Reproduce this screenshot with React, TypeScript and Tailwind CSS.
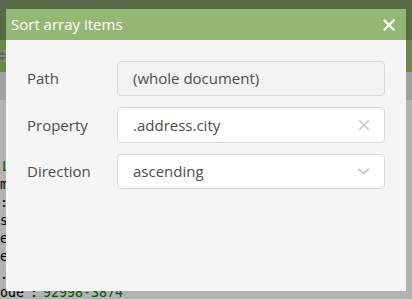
import React from 'react';

const CloseIcon: React.FC<{ className?: string; strokeWidth?: number }> = ({ className, strokeWidth = 2 }) => (
  <svg viewBox="0 0 12 12" className={className} fill="none" stroke="currentColor" strokeWidth={strokeWidth} strokeLinecap="square">
    <path d="M1.5 1.5 L10.5 10.5 M10.5 1.5 L1.5 10.5" />
  </svg>
);

const ChevronIcon: React.FC<{ className?: string }> = ({ className }) => (
  <svg viewBox="0 0 14 8" className={className} fill="none" stroke="currentColor" strokeWidth={2}>
    <path d="M1 1 L7 6.5 L13 1" />
  </svg>
);

// only the first glyph of each line peeks out from behind the dialog
const lines: { text: string; color: string }[] = [
  { text: '', color: '' },
  { text: '', color: '' },
  { text: '', color: '' },
  { text: 'L', color: 'pl-[2px] text-[#008000]' },
  { text: 'm', color: 'text-black' },
  { text: ':', color: 'text-black' },
  { text: 's', color: 'text-black' },
  { text: 'e', color: 'text-black' },
  { text: 'e', color: 'text-black' },
  { text: '.', color: 'text-black' },
];

const Field: React.FC<{ label: string; children: React.ReactNode }> = ({ label, children }) => (
  <div className="flex items-center">
    <div className="w-[90px] text-[15px] text-[#4d4d4d]">{label}</div>
    {children}
  </div>
);

export default function App() {
  return (
    <div className="relative h-[299px] w-[412px] overflow-hidden bg-white font-['Open_Sans',sans-serif]">
      {/* editor behind the dialog */}
      <div className="h-[40px] bg-[#7b9963]" />
      <div className="flex h-[32px] items-center bg-[#99c572]">
        <div className="ml-[-4px] flex h-[12px] w-[12px] flex-col items-center justify-center bg-[#b7c9a8]">
          <svg viewBox="0 0 10 10" className="h-[10px] w-[10px] text-[#8a9a80]" fill="currentColor">
            <path d="M5 0 L9 4 L1 4 Z M5 10 L9 6 L1 6 Z" />
          </svg>
        </div>
      </div>
      <div className="h-[28px] bg-[#e5e5e5]" />
      <div className="pt-[4px] font-['DejaVu_Sans_Mono',monospace] text-[13.3px] leading-[18px]">
        {lines.map((l, i) => (
          <div key={i} className={`h-[18px] whitespace-pre ${l.color}`}>{l.text}</div>
        ))}
        <div className="flex h-[18px] whitespace-pre">
          <span className="text-black">ode</span>
          <span className="pl-[6px] pr-[5px] text-black">:</span>
          <span className="text-[#008000]">92998-3874</span>
        </div>
      </div>

      {/* overlay + dialog */}
      <div className="absolute inset-0 flex justify-center bg-black/30 pt-[9px]">
        <div className="flex h-[282px] w-[400px] flex-col bg-[#f5f5f5]">
          <div className="flex h-[31px] items-center justify-between bg-[#93b874] pl-[5px] pr-[11px]">
            <span className="text-[15px] text-white">Sort array items</span>
            <CloseIcon className="h-[12px] w-[12px] text-white" strokeWidth={2.2} />
          </div>
          <div className="flex flex-col gap-[11px] px-[21px] pt-[21px]">
            <Field label="Path">
              <div className="flex h-[35px] flex-1 items-center rounded-[4px] border border-[#d9d9d9] bg-[#f2f2f2] px-[15px] text-[15px] text-[#4d4d4d]">
                (whole document)
              </div>
            </Field>
            <Field label="Property">
              <div className="flex h-[36px] flex-1 items-center justify-between rounded-[4px] border border-[#d9d9d9] bg-white pl-[15px] pr-[14px] text-[15px] text-[#4d4d4d]">
                <span>.address.city</span>
                <CloseIcon className="h-[12px] w-[12px] text-[#c4c4c4]" strokeWidth={1.4} />
              </div>
            </Field>
            <Field label="Direction">
              <div className="flex h-[35px] flex-1 items-center justify-between rounded-[4px] border border-[#d9d9d9] bg-white pl-[15px] pr-[14px] text-[15px] text-[#4d4d4d]">
                <span>ascending</span>
                <ChevronIcon className="h-[7px] w-[13px] text-[#c4c4c4]" />
              </div>
            </Field>
          </div>
        </div>
      </div>
    </div>
  );
}
